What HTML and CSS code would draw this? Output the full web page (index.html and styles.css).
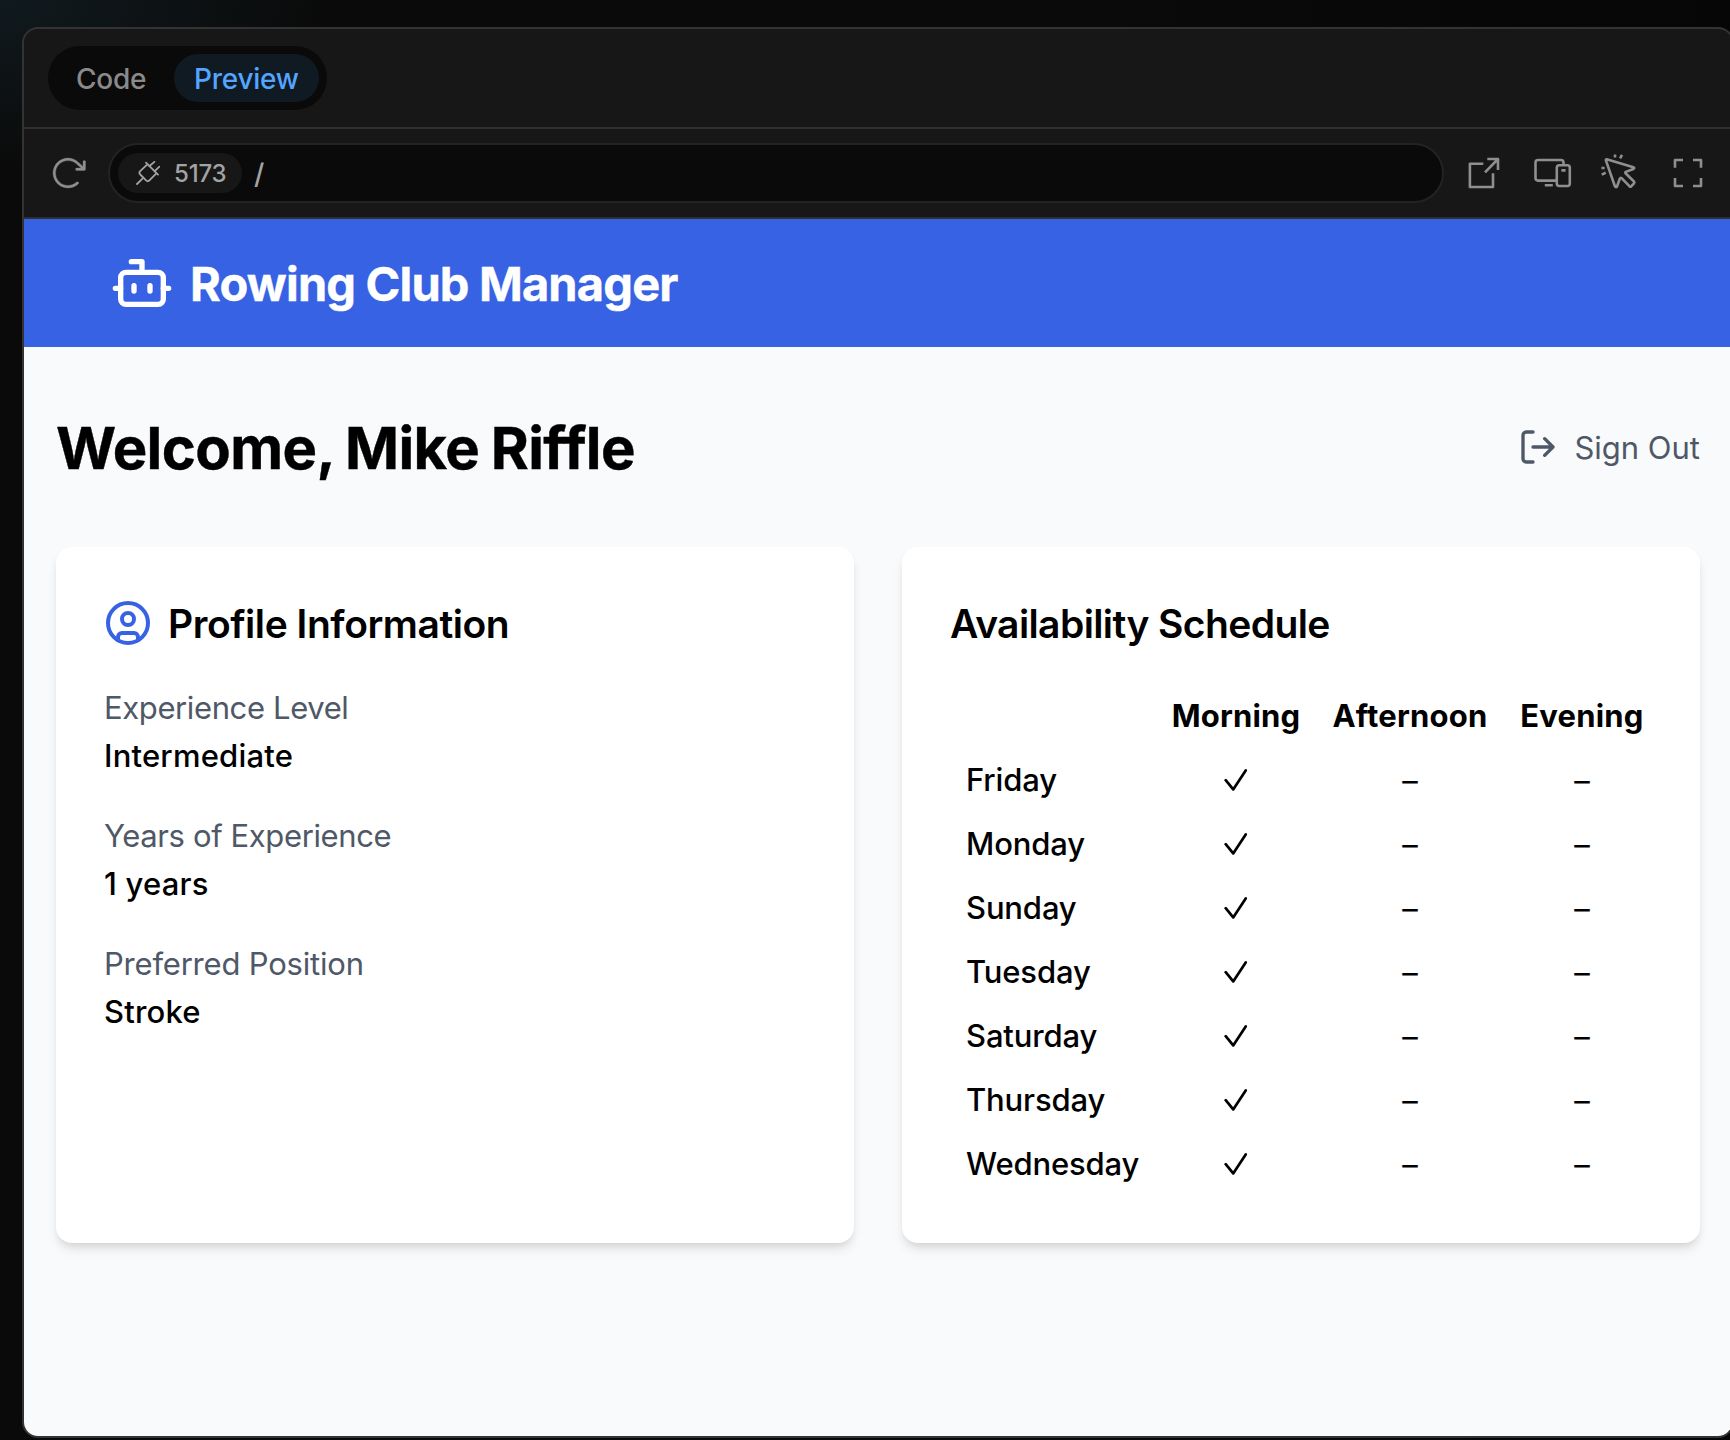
FILE: index.html
```html
<!DOCTYPE html>
<html lang="en">
<head>
<meta charset="utf-8">
<title>Rowing Club Manager</title>
<link rel="stylesheet" href="styles.css">
</head>
<body>
<div class="window">
  <div class="tabs-bar">
    <div class="tabs">
      <button class="tab">Code</button>
      <button class="tab tab-active">Preview</button>
    </div>
  </div>
  <div class="address-bar">
    <svg class="tool-icon" viewBox="0 0 256 256"><path fill="currentColor" stroke="currentColor" stroke-width="2" d="M240,56v48a8,8,0,0,1-8,8H184a8,8,0,0,1,0-16H211.4L184.81,71.64l-.25-.24a80,80,0,1,0-1.67,114.78,8,8,0,0,1,11,11.63A95.44,95.44,0,0,1,128,224h-1.32A96,96,0,1,1,195.75,60L224,85.8V56a8,8,0,1,1,16,0Z"/></svg>
    <div class="url">
      <div class="port">
        <svg class="plug" viewBox="0 0 24 24"><path d="M1 23l5.2-5.2M10 1.6l12 12M13.2 5.2L18.4.9M18.4 10.3L23.4 5.7M11.6 3.2L4.2 10.2q-1.6 1.6 0 3.3l5.9 5.9q1.7 1.6 3.3 0l7.2-7.2"/></svg>
        <span>5173</span>
      </div>
      <span class="path">/</span>
    </div>
    <div class="tools">
      <svg class="tool-icon line" viewBox="0 0 40 40"><path d="M19.3 10.8H5.9V34H29V20.3M23.3 6H34V17M34 6L21 19.3"/></svg>
      <svg class="tool-icon line" viewBox="0 0 40 40"><path d="M24 27.6H6a2.5 2.5 0 0 1-2.5-2.5V9.5A2.5 2.5 0 0 1 6 7h23a2.5 2.5 0 0 1 2.5 2.5v2M12.8 32.3h8M29.4 17.4h4.2"/><rect x="24.8" y="12.2" width="13" height="20.8" rx="2.5"/></svg>
      <svg class="tool-icon line" viewBox="0 0 40 40"><path d="M6.7 6.3L33.4 14.2q1.6.8 0 1.8L25.8 18.9q-1 .7 0 1.6l8.2 8q.8 1 0 1.8l-2.6 2.9q-1 .9-2 0l-7.8-8q-1.1-.8-1.8.4l-2.7 7.6q-1.2 1.9-2.2 0L5.9 7.4q-.2-1.2.8-1.1zM15 1.6v3M22 1.9l-1.9 3.5M1.4 15h3.2M1.7 21.6l4-1.8"/></svg>
      <svg class="tool-icon line" viewBox="0 0 40 40"><path d="M7 14.8V7h8M25 7H33v7.8M33 25v8h-8M15 33H7v-8"/></svg>
    </div>
  </div>
  <div class="app">
    <header class="banner">
      <svg class="bot" viewBox="0 0 24 24"><path d="M12 8V4H8"/><rect x="4" y="8" width="16" height="12" rx="2"/><path d="M2 14h2M20 14h2M15 13v2M9 13v2"/></svg>
      <span class="brand">Rowing Club Manager</span>
    </header>
    <main class="content">
      <div class="welcome-row">
        <h1 class="welcome">Welcome, Mike Riffle</h1>
        <button class="sign-out">
          <svg class="logout" viewBox="0 0 24 24"><path d="M9 21H5a2 2 0 0 1-2-2V5a2 2 0 0 1 2-2h4M16 17l5-5-5-5M21 12H9"/></svg>
          <span>Sign Out</span>
        </button>
      </div>
      <div class="cards">
        <section class="card">
          <h2 class="card-title">
            <svg class="user" viewBox="0 0 24 24"><circle cx="12" cy="12" r="10"/><circle cx="12" cy="10" r="3"/><path d="M7 20.66V19a2 2 0 0 1 2-2h6a2 2 0 0 1 2 2v1.66"/></svg>
            <span class="profile-title">Profile Information</span>
          </h2>
          <dl class="fields">
            <div><dt class="tight">Experience Level</dt><dd>Intermediate</dd></div>
            <div><dt class="tight">Years of Experience</dt><dd>1 years</dd></div>
            <div><dt>Preferred Position</dt><dd>Stroke</dd></div>
          </dl>
        </section>
        <section class="card">
          <h2 class="card-title"><span class="schedule-title">Availability Schedule</span></h2>
          <div class="schedule" id="schedule">
            <span></span><span class="slot head">Morning</span><span class="slot head">Afternoon</span><span class="slot head">Evening</span>
          </div>
        </section>
      </div>
    </main>
  </div>
</div>
<script src="schedule.js"></script>
</body>
</html>
```

FILE: schedule.js
```js
const days = ["Friday", "Monday", "Sunday", "Tuesday", "Saturday", "Thursday", "Wednesday"];
const check = '<svg class="check" viewBox="0 0 24 24"><path d="M1.7 12.2L9.2 21.4L21.7 2.4"/></svg>';
document.getElementById("schedule").insertAdjacentHTML("beforeend", days.map(day =>
  `<span class="day">${day}</span><span class="slot">${check}</span><span class="slot dash">–</span><span class="slot dash">–</span>`
).join(""));
```

FILE: styles.css
```css
* { box-sizing: border-box; }
body {
  margin: 0;
  height: 1440px;
  overflow: hidden;
  padding: 27px 0 0 22px;
  background: radial-gradient(ellipse 330px 170px at 0 0, #101a1e 0%, rgba(16, 26, 30, 0) 100%), linear-gradient(to right, #0a0a0a 60%, #060606);
  font-family: Inter, "Liberation Sans", sans-serif;
  color: #000;
}
h1, h2, dl, dd, dt { margin: 0; }
button { border: 0; background: none; padding: 0; font: inherit; color: inherit; }
svg { display: block; flex: none; fill: none; stroke-linecap: round; stroke-linejoin: round; }

.window {
  width: 1712px;
  height: 1411px;
  border: 2px solid #333;
  border-radius: 16px;
  overflow: hidden;
  background: #171717;
}
.tabs-bar {
  height: 100px;
  padding: 17px 24px;
  border-bottom: 2px solid #303030;
}
.tabs {
  display: inline-flex;
  align-items: center;
  gap: 8px;
  height: 64px;
  padding: 8px;
  border-radius: 32px;
  background: #0a0a0a;
}
.tab {
  height: 48px;
  padding: 2px 20px 0;
  border-radius: 24px;
  font-size: 28px;
  font-weight: 500;
  line-height: 46px;
  letter-spacing: -0.28px;
  color: #8a8a8a;
}
.tab-active { background: #101a22; color: #54a5ff; }

.address-bar {
  display: flex;
  align-items: center;
  height: 90px;
  padding: 0 24px;
  border-bottom: 2px solid #303030;
  color: #8f8f8f;
}
.tool-icon { width: 40px; height: 40px; }
.line { stroke: currentColor; stroke-width: 2.6; stroke-linecap: butt; }
.url {
  display: flex;
  align-items: center;
  gap: 12px;
  width: 1336px;
  height: 60px;
  margin: 0 20px;
  padding: 0 8px;
  border: 2px solid #232323;
  border-radius: 30px;
  background: #0a0a0a;
}
.port {
  display: flex;
  align-items: center;
  gap: 14px;
  width: 124px;
  height: 40px;
  padding-left: 18px;
  border-radius: 20px;
  background: #171717;
  font-size: 24px;
  font-weight: 500;
  letter-spacing: -0.2px;
  color: #a3a3a3;
}
.plug { width: 24px; height: 24px; stroke: currentColor; stroke-width: 1.8; }
.path { padding-top: 2px; font-size: 28px; font-weight: 500; color: #a3a3a3; }
.tools { display: flex; gap: 28px; }

.app { height: 1218px; background: #f9fafc; }
.banner {
  display: flex;
  align-items: center;
  gap: 16px;
  height: 128px;
  padding-left: 86px;
  background: #3862e4;
  color: #fff;
}
.bot { width: 64px; height: 64px; stroke: currentColor; stroke-width: 2; }
.brand { font-size: 47px; font-weight: 700; letter-spacing: -0.82px; -webkit-text-stroke: 0.4px; }

.content { padding: 64px 32px; }
.welcome-row {
  display: flex;
  align-items: center;
  justify-content: space-between;
  height: 72px;
  margin-bottom: 64px;
}
.welcome {
  padding-top: 2px;
  font-size: 58px;
  font-weight: 700;
  letter-spacing: -0.62px;
  word-spacing: -1.5px;
  -webkit-text-stroke: 0.4px;
}
.sign-out {
  display: flex;
  align-items: center;
  gap: 16px;
  font-size: 31px;
  color: #4f5867;
}
.logout { width: 40px; height: 40px; stroke: currentColor; stroke-width: 2; }

.cards { display: grid; grid-template-columns: 798px 798px; gap: 48px; }
.card {
  height: 696px;
  padding: 48px;
  border-radius: 16px;
  background: #fff;
  box-shadow: 0 8px 12px -2px rgba(0, 0, 0, 0.1), 0 4px 8px -4px rgba(0, 0, 0, 0.12);
}
.card-title {
  display: flex;
  align-items: center;
  gap: 16px;
  height: 56px;
  margin-bottom: 32px;
  font-size: 39px;
  font-weight: 600;
}
.profile-title { letter-spacing: -0.45px; }
.schedule-title { letter-spacing: -0.6px; }
.user { width: 48px; height: 48px; stroke: #3862e4; stroke-width: 2; }

.fields {
  display: flex;
  flex-direction: column;
  gap: 32px;
  padding-top: 1px;
  font-size: 31px;
  line-height: 48px;
}
.fields dt { color: #4f5867; letter-spacing: -0.2px; }
.fields .tight { letter-spacing: -0.38px; }
.fields dd { font-weight: 500; letter-spacing: 0.2px; }

.schedule {
  display: grid;
  grid-template-columns: 206px 160px 188px 156px;
  grid-auto-rows: 64px;
  font-size: 31px;
  font-weight: 500;
  line-height: 64px;
}
.day { padding: 1px 0 0 16px; letter-spacing: -0.15px; }
.slot { display: flex; align-items: center; justify-content: center; }
.head { padding-top: 2px; font-weight: 700; letter-spacing: 0.2px; }
.check { width: 24px; height: 24px; margin-top: 2px; stroke: #000; stroke-width: 2.7; }
.dash { padding-top: 4px; font-weight: 400; }
```
